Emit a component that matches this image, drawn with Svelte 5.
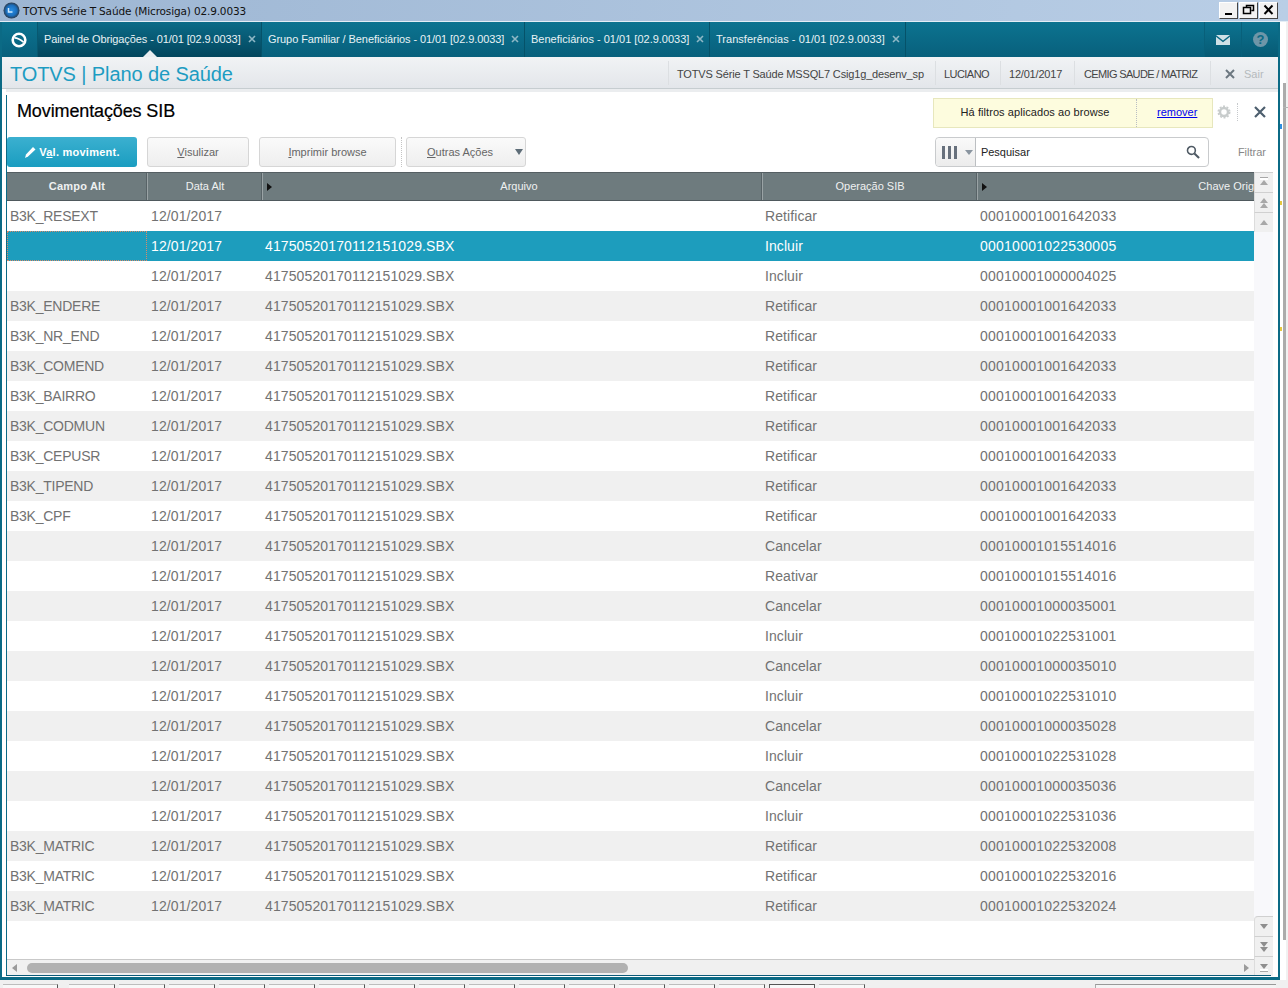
<script>
  const hdr = [
    { t: 'Campo Alt', w: 141, bold: true },
    { t: 'Data Alt', w: 115 },
    { t: 'Arquivo', w: 500, arrow: true },
    { t: 'Operação SIB', w: 215 },
    { t: 'Chave Orig', w: 276, arrow: true, end: true }
  ];
  const F = '41750520170112151029.SBX';
  const rows = [
    ['B3K_RESEXT', '', 'Retificar', '00010001001642033'],
    ['', F, 'Incluir', '00010001022530005'],
    ['', F, 'Incluir', '00010001000004025'],
    ['B3K_ENDERE', F, 'Retificar', '00010001001642033'],
    ['B3K_NR_END', F, 'Retificar', '00010001001642033'],
    ['B3K_COMEND', F, 'Retificar', '00010001001642033'],
    ['B3K_BAIRRO', F, 'Retificar', '00010001001642033'],
    ['B3K_CODMUN', F, 'Retificar', '00010001001642033'],
    ['B3K_CEPUSR', F, 'Retificar', '00010001001642033'],
    ['B3K_TIPEND', F, 'Retificar', '00010001001642033'],
    ['B3K_CPF', F, 'Retificar', '00010001001642033'],
    ['', F, 'Cancelar', '00010001015514016'],
    ['', F, 'Reativar', '00010001015514016'],
    ['', F, 'Cancelar', '00010001000035001'],
    ['', F, 'Incluir', '00010001022531001'],
    ['', F, 'Cancelar', '00010001000035010'],
    ['', F, 'Incluir', '00010001022531010'],
    ['', F, 'Cancelar', '00010001000035028'],
    ['', F, 'Incluir', '00010001022531028'],
    ['', F, 'Cancelar', '00010001000035036'],
    ['', F, 'Incluir', '00010001022531036'],
    ['B3K_MATRIC', F, 'Retificar', '00010001022532008'],
    ['B3K_MATRIC', F, 'Retificar', '00010001022532016'],
    ['B3K_MATRIC', F, 'Retificar', '00010001022532024']
  ];
  const tabs = [
    { t: 'Painel de Obrigações - 01/01 [02.9.0033]', w: 224, ls: -0.1, active: true },
    { t: 'Grupo Familiar / Beneficiários - 01/01 [02.9.0033]', w: 263, ls: -0.08 },
    { t: 'Beneficiários - 01/01 [02.9.0033]', w: 185, ls: 0 },
    { t: 'Transferências - 01/01 [02.9.0033]', w: 196, ls: 0.03 }
  ];
  const info = ['TOTVS Série T Saúde MSSQL7 Csig1g_desenv_sp', 'LUCIANO', '12/01/2017', 'CEMIG SAUDE / MATRIZ'];
</script>

<div class="screen">
  <div class="titlebar">
    <svg class="appicon" width="17" height="17" viewBox="0 0 17 17">
      <defs><radialGradient id="orb" cx="50%" cy="50%" r="50%"><stop offset="0" stop-color="#2a8fe4"/><stop offset="0.65" stop-color="#1b6fbe"/><stop offset="1" stop-color="#2b3c50"/></radialGradient></defs>
      <circle cx="8.500" cy="8.500" r="8" fill="url(#orb)"/>
      <path d="M5.500 6v4h4" fill="none" stroke="#cfeaff" stroke-width="1.500"/>
    </svg>
    <span class="apptitle">TOTVS Série T Saúde (Microsiga) 02.9.0033</span>
    <div class="winbtns">
      <span class="wb"><svg width="14" height="12" viewBox="0 0 14 12"><rect x="3" y="9" width="7" height="2" fill="#000"/></svg></span>
      <span class="wb"><svg width="14" height="12" viewBox="0 0 14 12"><path d="M4.500 3V1.500h7v5H9.500M1.500 3.500h7v6h-7z" fill="none" stroke="#000" stroke-width="1.500"/></svg></span>
      <span class="wb"><svg width="14" height="12" viewBox="0 0 14 12"><path d="M2.500 1.500l8 8.500M10.500 1.500l-8 8.500" stroke="#000" stroke-width="2" fill="none"/></svg></span>
    </div>
  </div>

  <div class="outer">
    <div class="app">
      <div class="tabbar">
        <div class="home">
          <svg width="18" height="18" viewBox="0 0 18 18"><circle cx="9" cy="9" r="6.300" fill="none" stroke="#fff" stroke-width="2.600"/><path d="M4.500 6.800q4 0 9 4.400" fill="none" stroke="#fff" stroke-width="1.700"/></svg>
        </div>
        {#each tabs as tab}
          <div class="tab" class:active={tab.active} style="width:{tab.w}px">
            <span class="tablabel" style="letter-spacing:{tab.ls}px">{tab.t}</span>
            <svg class="tabx" width="8" height="8" viewBox="0 0 8 8"><path d="M1 1l6 6M7 1L1 7" stroke="#8fb8c6" stroke-width="1.600"/></svg>
            {#if tab.active}<i class="notch"></i>{/if}
          </div>
        {/each}
        <div class="tabspace"></div>
        <div class="tabicon">
          <svg width="14" height="10" viewBox="0 0 14 10"><path d="M0 0h14L7 5.500z M0 1.800v8.200h14V1.800L7 7.200z" fill="#cfe0e6"/></svg>
        </div>
        <div class="tabicon">
          <svg width="15" height="15" viewBox="0 0 15 15"><circle cx="7.500" cy="7.500" r="7.500" fill="#6f96a8"/><text x="7.500" y="12" text-anchor="middle" class="qm">?</text></svg>
        </div>
      </div>

      <div class="brandbar">
        <div class="brand">TOTVS | Plano de Saúde</div>
        <div class="infos">
          {#each info as item}<span class="info">{item}</span>{/each}
          <span class="info exit">
            <svg width="10" height="10" viewBox="0 0 10 10"><path d="M1 1l8 8M9 1L1 9" stroke="#6c7780" stroke-width="2"/></svg>
            <em>Sair</em>
          </span>
        </div>
      </div>

      <div class="panel">
        <div class="panelhead">
          <h1>Movimentações SIB</h1>
          <div class="headright">
            <div class="notice"><span class="ntext">Há filtros aplicados ao browse</span><a href="#top" class="nlink">remover</a></div>
            <svg class="gear" width="14" height="14" viewBox="0 0 14 14"><circle cx="7" cy="7" r="4" fill="none" stroke="#c8cccc" stroke-width="2.500"/><circle cx="7" cy="7" r="5.700" fill="none" stroke="#c8cccc" stroke-width="1.600" stroke-dasharray="2 1.600"/></svg>
            <i class="dots"></i>
            <svg class="closex" width="12" height="12" viewBox="0 0 12 12"><path d="M1 1l10 10M11 1L1 11" stroke="#4d5f6e" stroke-width="2.200"/></svg>
          </div>
        </div>

        <div class="toolbar">
          <button class="primary">
            <svg width="13" height="13" viewBox="0 0 13 13"><path d="M1 12l1-3.500 7-7.500 2.500 2.500-7.500 7z" fill="#fff"/></svg>
            <span>V<u>a</u>l. moviment.</span>
          </button>
          <button class="btn b1"><u>V</u>isulizar</button>
          <button class="btn b2"><u>I</u>mprimir browse</button>
          <i class="sep"></i>
          <button class="btn b3"><span><u>O</u>utras Ações</span><i class="caret"></i></button>
          <div class="grow"></div>
          <div class="search">
            <div class="colpick"><i class="bars"></i><i class="caret small"></i></div>
            <span class="searchtext">Pesquisar</span>
            <svg width="14" height="14" viewBox="0 0 15 15"><circle cx="5.800" cy="5.800" r="4.200" fill="none" stroke="#4f5a64" stroke-width="1.700"/><path d="M9 9l5 5" stroke="#4f5a64" stroke-width="2.200"/></svg>
          </div>
          <span class="filtrar">Filtrar</span>
        </div>

        <div class="browse">
          <div class="gridarea">
            <div class="thead">
              {#each hdr as h}
                <div class="th" class:bold={h.bold} class:end={h.end} class:witharrow={h.arrow} style="width:{h.w}px">
                  {#if h.arrow}<i class="harrow"></i>{/if}
                  <span>{h.t}</span>
                </div>
              {/each}
            </div>
            {#each rows as r, i}
              <div class="row" class:sel={i === 1} class:odd={i % 2 === 1 && i !== 1}>
                {#if i === 1}<i class="focus"></i>{/if}
                <span class="c1">{r[0]}</span>
                <span class="c2">12/01/2017</span>
                <span class="c3">{r[1]}</span>
                <span class="c4">{r[2]}</span>
                <span class="c5">{r[3]}</span>
              </div>
            {/each}
          </div>
          <div class="vscroll">
            <div class="vgroup">
              <span class="vb"><i class="up line"></i></span>
              <span class="vb"><i class="up"></i><i class="up"></i></span>
              <span class="vb"><i class="up"></i></span>
            </div>
            <div class="vgroup">
              <span class="vb first"><i class="down"></i></span>
              <span class="vb"><i class="down"></i><i class="down"></i></span>
              <span class="vb"><i class="down line"></i></span>
            </div>
          </div>
          <div class="hscroll">
            <i class="hl"></i>
            <div class="htrack"><div class="hthumb"></div></div>
            <i class="hr"></i>
          </div>
        </div>
      </div>
    </div>
    <div class="backedge">
      <i class="tick blue"></i><i class="tick y1"></i><i class="tick y2"></i><i class="hline"></i>
    </div>
  </div>

  <div class="behind">
    {#each Array(17) as _, i}<span class="cell" class:dark={i === 15}></span>{/each}
    <span class="cell box"></span>
  </div>
</div>

<style>
  :global(body) { margin: 0; background: #fff; }
  .screen { width: 1288px; height: 988px; overflow: hidden; font-family: "Liberation Sans", Arial, sans-serif; background: #f0f0f0; }

  .titlebar { height: 22px; display: flex; align-items: center; padding-left: 3px; background: linear-gradient(90deg, #9db6d3, #b9cee6); border-bottom: 1px solid #e4edf5; box-sizing: border-box; }
  .appicon { margin-right: 3px; flex: none; }
  .apptitle { font-family: "DejaVu Sans", sans-serif; font-size: 10.500px; letter-spacing: -0.15px; color: #111; }
  .winbtns { margin-left: auto; margin-right: 10px; display: flex; gap: 1px; margin-top: -1px; }
  .wb { width: 19px; height: 17px; background: #f2f2f2; border: 1px solid; border-color: #fff #444 #444 #fff; box-sizing: border-box; display: flex; align-items: center; justify-content: center; }

  .outer { display: flex; height: 958px; }
  .app { width: 1280px; height: 958px; display: flex; flex-direction: column; flex: none; background: #fff; border: solid #0b6a85; border-width: 0 2px 3px; box-sizing: border-box; }
  .backedge { flex: 1; background: #fff; position: relative; }
  .backedge::before { content: ""; position: absolute; left: 3px; top: 61px; width: 3px; height: 857px; background: #ababab; }
  .backedge::after { content: ""; position: absolute; left: 6px; right: 0; top: 0; height: 100%; background: #f1f1f1; }
  .tick { position: absolute; left: 0; width: 2px; height: 4px; background: #e6c840; z-index: 1; }
  .tick.blue { top: 102px; height: 5px; background: #2f8fe0; }
  .tick.y1 { top: 179px; }
  .tick.y2 { top: 305px; }
  .hline { position: absolute; left: 3px; right: 0; top: 85px; height: 1px; background: #b5b5b5; z-index: 1; }

  .tabbar { height: 35px; flex: none; display: flex; background: linear-gradient(#0c7390, #08607c); color: #fff; font-size: 11px; }
  .home { width: 36px; flex: none; display: flex; align-items: center; justify-content: center; padding-right: 2px; border-right: 1px solid #085870; box-sizing: border-box; }
  .tab { flex: none; position: relative; box-sizing: border-box; height: 35px; padding-left: 6px; border-right: 1px solid #055269; display: flex; align-items: center; }
  .tab.active { background: linear-gradient(#0b6b88, #03465d); }
  .tablabel { color: #e8f2f5; white-space: nowrap; padding-bottom: 1px; }
  .tabx { position: absolute; right: 5px; top: 13px; }
  .notch { position: absolute; left: 105px; bottom: 0; width: 0; height: 0; border: 7px solid transparent; border-top: 0; border-bottom: 7px solid #e9edf0; }
  .tabspace { flex: 1; }
  .tabicon { width: 37px; flex: none; display: flex; align-items: center; justify-content: center; border-left: 1px solid #08607a; box-sizing: border-box; background: linear-gradient(#0c7390, #075a74); }
  .qm { font: bold 13px "Liberation Sans", sans-serif; fill: #0b6a85; }

  .brandbar { height: 32px; flex: none; display: flex; align-items: center; justify-content: space-between; padding: 0 0 0 8px; box-sizing: border-box; background: linear-gradient(#f1f3f5, #e3e6ea); border-bottom: 1px solid #c6cdd0; }
  .brand { font-size: 20px; color: #1d9cc2; letter-spacing: -0.1px; padding-top: 3px; }
  .infos { display: grid; grid-template-columns: 267px 65px 74px 136px 68px; height: 24px; }
  .info { display: flex; align-items: center; padding: 2px 0 0 8px; font-size: 11px; color: #444; border-left: 1px solid #dcdfe2; white-space: nowrap; box-sizing: border-box; }
  .info:nth-child(1) { letter-spacing: -0.16px; }
  .info:nth-child(2) { letter-spacing: -0.55px; }
  .info:nth-child(3) { letter-spacing: -0.2px; }
  .info:nth-child(4) { letter-spacing: -0.65px; padding-left: 9px; }
  .info.exit { gap: 9px; padding-left: 14px; }
  .exit em { font-style: normal; color: #b5babd; }

  .panel { flex: 1; min-height: 0; margin: 0 0 1px 4px; background: #fff; padding-left: 1px; display: flex; flex-direction: column; border-top: 3px solid #ebedef; position: relative; }
  .panel::before { content: ""; position: absolute; left: 0; top: 3px; bottom: 0; width: 1px; background: #0b6a85; }
  .panel::after { content: ""; position: absolute; left: 0; bottom: 0; width: 1265px; height: 1px; background: #0b5a78; }
  .panelhead { height: 45px; flex: none; display: flex; justify-content: space-between; padding-left: 10px; box-sizing: border-box; }
  h1 { margin: 6px 0 0; font-size: 18px; font-weight: 400; color: #000; line-height: 26px; letter-spacing: -0.12px; -webkit-text-stroke: 0.2px #000; }
  .headright { display: flex; align-items: flex-start; margin-right: 12px; }
  .notice { margin-top: 6px; width: 280px; height: 30px; box-sizing: border-box; background: #fdfcde; border: 1px solid #e7e7bd; display: flex; font-size: 11px; align-items: center; padding-bottom: 0; }
  .ntext { width: 203px; border-right: 1px dotted #b9bec4; height: 100%; display: flex; align-items: center; justify-content: center; box-sizing: border-box; color: #222; letter-spacing: 0.07px; padding-bottom: 2px; }
  .nlink { margin: -2px 0 0 20px; color: #00e; text-decoration: underline; }
  .gear { margin: 13px 0 0 4px; flex: none; }
  .dots { margin: 11px 0 0 6px; height: 18px; border-left: 1px dotted #c6c9cc; }
  .closex { margin: 14px 0 0 16px; flex: none; }

  .toolbar { height: 30px; flex: none; display: flex; align-items: stretch; font-size: 11px; margin-bottom: 5px; }
  button { font: inherit; box-sizing: border-box; height: 30px; border-radius: 3px; cursor: default; padding: 0; }
  .primary { width: 130px; background: linear-gradient(#3bb0d0, #1a9dc0); border: 0; color: #fff; font-weight: 700; display: flex; align-items: center; justify-content: center; gap: 2px; letter-spacing: 0.25px; }
  .btn { background: linear-gradient(#fafafa, #eeeeee); border: 1px solid #d6d6d6; color: #666; }
  .b1 { width: 102px; margin-left: 10px; }
  .b2 { width: 137px; margin-left: 10px; }
  .sep { margin: 0 4px 0 5px; border-left: 1px dotted #c4c4c4; }
  .b3 { width: 120px; display: flex; align-items: center; padding: 0 2px 0 20px; justify-content: space-between; }
  .caret { width: 0; height: 0; border: 4.500px solid transparent; border-top: 6px solid #5e6d78; border-bottom: 0; }
  .caret.small { border-width: 4px; border-top-width: 5px; border-bottom-width: 0; border-top-color: #8a95a0; margin-left: 8px; }
  .grow { flex: 1; }
  .search { width: 274px; height: 30px; box-sizing: border-box; border: 1px solid #c9cbcd; border-radius: 4px; display: flex; align-items: center; color: #222; padding-right: 8px; }
  .colpick { width: 40px; height: 100%; flex: none; display: flex; align-items: center; box-sizing: border-box; padding-left: 6px; border-right: 1px solid #bcbfc2; background: linear-gradient(#fafafa, #ececec); border-radius: 4px 0 0 4px; }
  .bars { width: 15px; height: 13px; background: linear-gradient(90deg, #67707c 3px, transparent 3px, transparent 6px, #67707c 6px, #67707c 9px, transparent 9px, transparent 12px, #67707c 12px); }
  .searchtext { flex: 1; padding-left: 5px; }
  .filtrar { margin: 0 12px 0 29px; color: #888; align-self: center; }

  .browse { flex: 1; min-height: 0; display: grid; grid-template-columns: 1247px 19px 1fr; grid-template-rows: 1fr 17px; }
  .gridarea { overflow: hidden; min-height: 0; }
  .thead { display: flex; height: 29px; background: #6e7b7e; border-top: 1px solid #555f63; border-bottom: 1px solid #4f595d; box-sizing: border-box; overflow: hidden; }
  .th { flex: none; box-sizing: border-box; border-right: 1px solid #9aa3a5; box-shadow: inset -1px 0 0 #586367; color: #eef1f1; font-size: 11px; display: flex; align-items: center; justify-content: center; position: relative; padding-bottom: 2px; }
  .th.bold { font-weight: 700; letter-spacing: 0.2px; }
  .th.witharrow { padding-left: 13px; }
  .th.end { border-right: 0; box-shadow: none; justify-content: flex-end; padding-left: 0; }
  .harrow { position: absolute; left: 4px; top: 10px; width: 0; height: 0; border: 4px solid transparent; border-left: 5px solid #111; border-right: 0; }

  .row { height: 30px; position: relative; font-size: 14px; line-height: 30px; color: #727272; white-space: nowrap; }
  .row.odd { background: #f0f0f0; }
  .row.sel { background: #1d9dbd; color: #fff; }
  .row span { position: absolute; top: 0; }
  .focus { position: absolute; left: 0; top: 0; width: 140px; height: 30px; box-sizing: border-box; border: 1px dotted #d98a6a; }
  .c1 { left: 3px; letter-spacing: -0.25px; }
  .c2 { left: 144px; letter-spacing: 0.1px; }
  .c3 { left: 258px; letter-spacing: 0.12px; }
  .c4 { left: 758px; letter-spacing: 0.08px; }
  .c5 { left: 973px; letter-spacing: 0.24px; }

  .vscroll { grid-column: 2; grid-row: 1 / 3; background: #f8f8fb; display: flex; flex-direction: column; justify-content: space-between; }
  .vgroup { display: flex; flex-direction: column; }
  .vb { height: 20px; display: flex; flex-direction: column; align-items: center; justify-content: center; background: #f0f0f0; border-top: 1px solid #d0d0d0; border-left: 1px solid #dcdcdc; box-sizing: border-box; }
  .vb.first { border-top-left-radius: 4px; }
  .up, .down { width: 0; height: 0; border: 4.500px solid transparent; }
  .up { border-bottom: 5px solid #a8a8a8; border-top: 0; }
  .down { border-top: 5px solid #8e8e8e; border-bottom: 0; }
  .up.line { box-shadow: 0 -2px 0 0 #fff, 0 -3px 0 0 #a8a8a8; }
  .down.line { box-shadow: 0 2px 0 0 #fff, 0 3px 0 0 #a8a8a8; }

  .hscroll { display: flex; align-items: center; background: #f0f0f0; border-top: 1px solid #c9c9c9; box-sizing: border-box; grid-column: 1; grid-row: 2; padding: 0 5px; }
  .hl, .hr { width: 0; height: 0; border: 4.500px solid transparent; flex: none; }
  .hl { border-right: 5px solid #9a9a9a; border-left: 0; }
  .hr { border-left: 5px solid #9a9a9a; border-right: 0; }
  .htrack { flex: 1; padding-left: 10px; }
  .hthumb { width: 601px; height: 10px; border-radius: 5px; background: #b1b1b1; }

  .behind { height: 8px; display: flex; gap: 4px; padding: 4px 0 0 3px; box-sizing: border-box; background: #f0f0f0; }
  .cell { width: 46px; flex: none; height: 4px; border-top: 1px solid #bdbdbd; border-right: 1px solid #555; box-sizing: border-box; background: #f8f8f8; }
  .cell:first-child { width: 55px; margin-right: 7px; }
  .cell.dark { border-top-color: #555; border-left: 1px solid #555; }
  .cell.box { width: 181px; margin-left: 226px; border-right: 0; border-left: 1px solid #aaa; border-top-color: #999; background: #f4f4f4; }
</style>
